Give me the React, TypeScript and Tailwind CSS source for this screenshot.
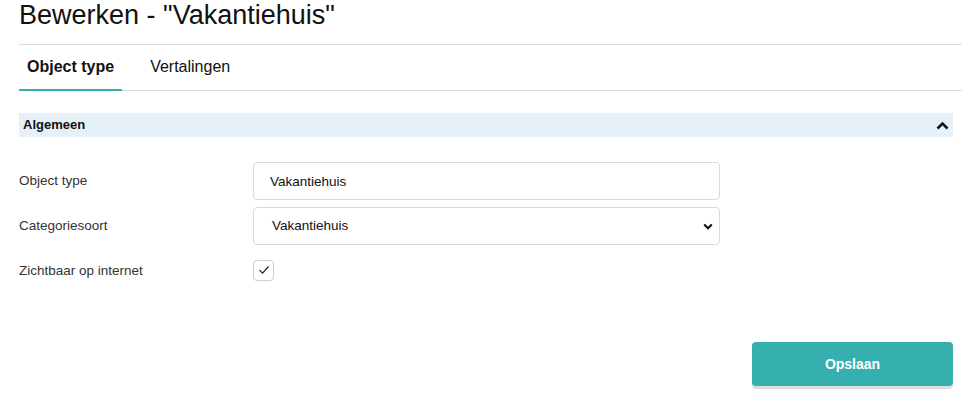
import React from "react";

export default function App() {
  const font = { fontFamily: '"Liberation Sans", Arial, sans-serif' };
  return (
    <div className="w-[962px] h-[400px] bg-white overflow-hidden" style={font}>
      <div className="pl-[19px]">
        <h1 className="text-[27px] leading-[31px] text-[#111] font-normal">Bewerken - "Vakantiehuis"</h1>
        <div className="mt-[13px] border-t border-[#dcdcdc]" />
        <div className="flex h-[46px] border-b border-[#dcdcdc]">
          <div className="flex items-center px-[8px] border-b-2 border-[#36b0af] mb-[-1px] pb-[1px]">
            <span className="text-[16px] font-bold text-[#111]">Object type</span>
          </div>
          <div className="flex items-center px-[8px] ml-[20px] pb-[1px]">
            <span className="text-[16px] text-[#111]">Vertalingen</span>
          </div>
        </div>
      </div>
      <div className="pl-[19px] pr-[9px]">
        <div className="mt-[22px] h-[24px] bg-[#e6f0f8] flex items-center justify-between pl-[4px] pr-[4px]">
          <span className="text-[13px] font-bold text-[#111]">Algemeen</span>
          <svg width="13" height="9" viewBox="0 0 13 9">
            <path d="M1.5 7.5 L6.5 2.5 L11.5 7.5" fill="none" stroke="#111" strokeWidth="2.6" />
          </svg>
        </div>
        <div className="mt-[25px] flex flex-col gap-[7px]">
          <div className="flex items-center h-[38px]">
            <label className="w-[234px] text-[13.5px] text-[#333]">Object type</label>
            <input
              readOnly
              value="Vakantiehuis"
              className="w-[467px] h-[38px] border border-[#dadada] rounded-[4px] pl-[16px] text-[13.5px] text-[#111] outline-none"
              style={font}
            />
          </div>
          <div className="flex items-center h-[38px]">
            <label className="w-[234px] text-[13.5px] text-[#333]">Categoriesoort</label>
            <div className="relative w-[467px] h-[38px] border border-[#dadada] rounded-[4px] flex items-center pl-[18px]">
              <span className="text-[13.5px] text-[#111]">Vakantiehuis</span>
              <svg width="10" height="7" viewBox="0 0 10 7" className="absolute right-[6px] top-[15px]">
                <path d="M1.2 1.5 L5 5.2 L8.8 1.5" fill="none" stroke="#111" strokeWidth="2.2" />
              </svg>
            </div>
          </div>
          <div className="flex items-center h-[38px]">
            <label className="w-[234px] text-[13.5px] text-[#333]">Zichtbaar op internet</label>
            <div className="w-[21px] h-[21px] border border-[#cfcfcf] rounded-[4px] flex items-center justify-center mt-[-2px]">
              <svg width="12" height="10" viewBox="0 0 12 10">
                <path d="M1.5 5.2 L4.5 8.2 L10.5 1.5" fill="none" stroke="#222" strokeWidth="1.2" />
              </svg>
            </div>
          </div>
        </div>
        <div className="mt-[52px] flex justify-end">
          <button className="w-[201px] h-[44px] rounded-[4px] bg-[#35b0af] text-white text-[14px] font-bold shadow-[0_3px_0_#dddddd]" style={font}>
            Opslaan
          </button>
        </div>
      </div>
    </div>
  );
}
